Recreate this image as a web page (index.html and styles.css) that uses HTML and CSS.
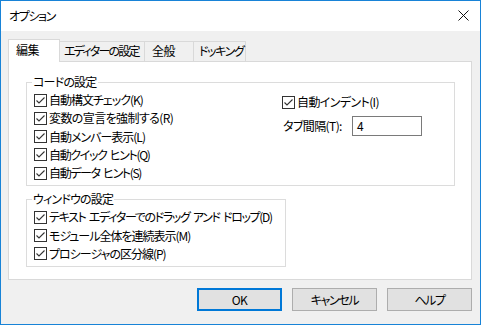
FILE: index.html
```html
<!DOCTYPE html>
<html lang="ja">
<head>
<meta charset="utf-8">
<title>オプション</title>
<link rel="stylesheet" href="styles.css">
</head>
<body>
<svg class="defs" width="0" height="0">
  <symbol id="cb" viewBox="0 0 13 13">
    <rect x="0.5" y="0.5" width="12" height="12" fill="#fff" stroke="#333"/>
    <path d="M2.5 6.5 L5 9 L10.5 3.5" fill="none" stroke="#333" stroke-width="1.1"/>
  </symbol>
</svg>
<div class="window">
  <div class="titlebar">
    <span class="title tighter">オプション</span>
    <svg class="close" width="11" height="11" viewBox="0 0 11 11"><path d="M0.5 0.5 L10.5 10.5 M10.5 0.5 L0.5 10.5" stroke="#111" stroke-width="1" fill="none"/></svg>
  </div>
  <div class="main">
    <div class="tabs">
      <div class="tab active">編集</div>
      <div class="tab t2">エディターの設定</div>
      <div class="tab t3">全般</div>
      <div class="tab t4">ドッキング</div>
    </div>
    <div class="panel">
      <fieldset class="group code">
        <legend>コードの設定</legend>
        <div class="code-grid">
          <div class="col">
            <label class="check tight"><svg class="cb"><use href="#cb"/></svg>自動構文チェック(K)</label>
            <label class="check"><svg class="cb"><use href="#cb"/></svg>変数の宣言を強制する(R)</label>
            <label class="check tight"><svg class="cb"><use href="#cb"/></svg>自動メンバー表示(L)</label>
            <label class="check tighter"><svg class="cb"><use href="#cb"/></svg>自動クイック ヒント(Q)</label>
            <label class="check tighter"><svg class="cb"><use href="#cb"/></svg>自動データ ヒント(S)</label>
          </div>
          <div class="col right">
            <label class="check"><svg class="cb"><use href="#cb"/></svg>自動インデント(I)</label>
            <div class="tabrow">
              <span class="tablabel">タブ間隔(T):</span>
              <span class="input">4</span>
            </div>
          </div>
        </div>
      </fieldset>
      <fieldset class="group win">
        <legend>ウィンドウの設定</legend>
        <label class="check tighter"><svg class="cb"><use href="#cb"/></svg>テキスト エディターでのドラッグ アンド ドロップ(D)</label>
        <label class="check tight"><svg class="cb"><use href="#cb"/></svg>モジュール全体を連続表示(M)</label>
        <label class="check tight"><svg class="cb"><use href="#cb"/></svg>プロシージャの区分線(P)</label>
      </fieldset>
    </div>
    <div class="buttons">
      <div class="btn default">OK</div>
      <div class="btn tighter">キャンセル</div>
      <div class="btn tighter">ヘルプ</div>
    </div>
  </div>
</div>
</body>
</html>
```

FILE: styles.css
```css
html, body {
  margin: 0;
  padding: 0;
  background: #fff;
}

body {
  font-family: "Noto Sans CJK JP", "Noto Sans", sans-serif;
  font-size: 12px;
  letter-spacing: -0.6px;
  word-spacing: 2px;
  color: #000;
  font-feature-settings: "palt";
}

.tight {
  letter-spacing: -1px;
}

.tighter {
  letter-spacing: -1.35px;
}

.defs {
  position: absolute;
  width: 0;
  height: 0;
}

.window {
  width: 481px;
  height: 325px;
  box-sizing: border-box;
  border: 1px solid #1883d7;
  background: #f0f0f0;
  display: flex;
  flex-direction: column;
}

.titlebar {
  height: 30px;
  flex: none;
  background: #fff;
  display: flex;
  align-items: center;
  justify-content: space-between;
  padding: 0 11px 1px 8px;
  box-sizing: border-box;
}

.title {
  line-height: 16px;
}

.close {
  display: block;
}

.main {
  padding: 8px 8px 0 7px;
}

.tabs {
  height: 22px;
  display: flex;
  align-items: flex-end;
  position: relative;
  z-index: 1;
}

.tab {
  box-sizing: border-box;
  height: 20px;
  border: 1px solid #d9d9d9;
  border-bottom: none;
  background: #f0f0f0;
  display: flex;
  align-items: center;
  justify-content: flex-start;
  line-height: 16px;
  padding-bottom: 1px;
  white-space: nowrap;
}

.tab + .tab {
  margin-left: -1px;
}

.tab.active {
  width: 52px;
  height: 23px;
  margin-bottom: -1px;
  background: #fff;
  padding: 0 0 2px 7px;
  position: relative;
  z-index: 2;
}

.tab.t2 {
  width: 86px;
  padding-left: 4px;
  letter-spacing: -1.8px;
}

.tab.t3 {
  width: 50px;
  padding-left: 7px;
}

.tab.t4 {
  width: 53px;
  padding-left: 5px;
  letter-spacing: -1.4px;
}

.panel {
  height: 219px;
  box-sizing: border-box;
  background: #fff;
  border: 1px solid #d9d9d9;
  padding: 12px 16px 0 17px;
}

.group {
  margin: 0;
  border: 1px solid #dcdcdc;
  padding: 1px 8px 3px 7px;
  min-width: 0;
  box-sizing: border-box;
}

.group legend {
  padding: 0 1px;
  margin-left: -2px;
  line-height: 16px;
  letter-spacing: -0.8px;
}

.group.code {
  width: 429px;
}

.group.win {
  width: 260px;
  margin-top: 5px;
}

.code-grid {
  display: grid;
  grid-template-columns: 248px 1fr;
}

.col.right {
  padding-top: 2px;
}

.check {
  display: flex;
  align-items: center;
  height: 18.25px;
  line-height: 16px;
  white-space: nowrap;
}

.cb {
  width: 13px;
  height: 13px;
  flex: none;
  margin-right: 2px;
}

.tabrow {
  display: flex;
  align-items: center;
  margin-top: 5px;
  padding-left: 1px;
}

.tablabel {
  width: 69px;
  line-height: 16px;
}

.input {
  box-sizing: border-box;
  width: 70px;
  height: 20px;
  border: 1px solid #7a7a7a;
  background: #fff;
  padding-left: 4px;
  line-height: 18px;
}

.buttons {
  margin-top: 8px;
  display: flex;
  justify-content: flex-end;
  gap: 10px;
}

.btn {
  box-sizing: border-box;
  width: 85px;
  height: 23px;
  background: #e1e1e1;
  border: 1px solid #adadad;
  display: flex;
  align-items: center;
  justify-content: center;
  line-height: 16px;
}

.btn.default {
  border: 2px solid #0078d7;
}
```
